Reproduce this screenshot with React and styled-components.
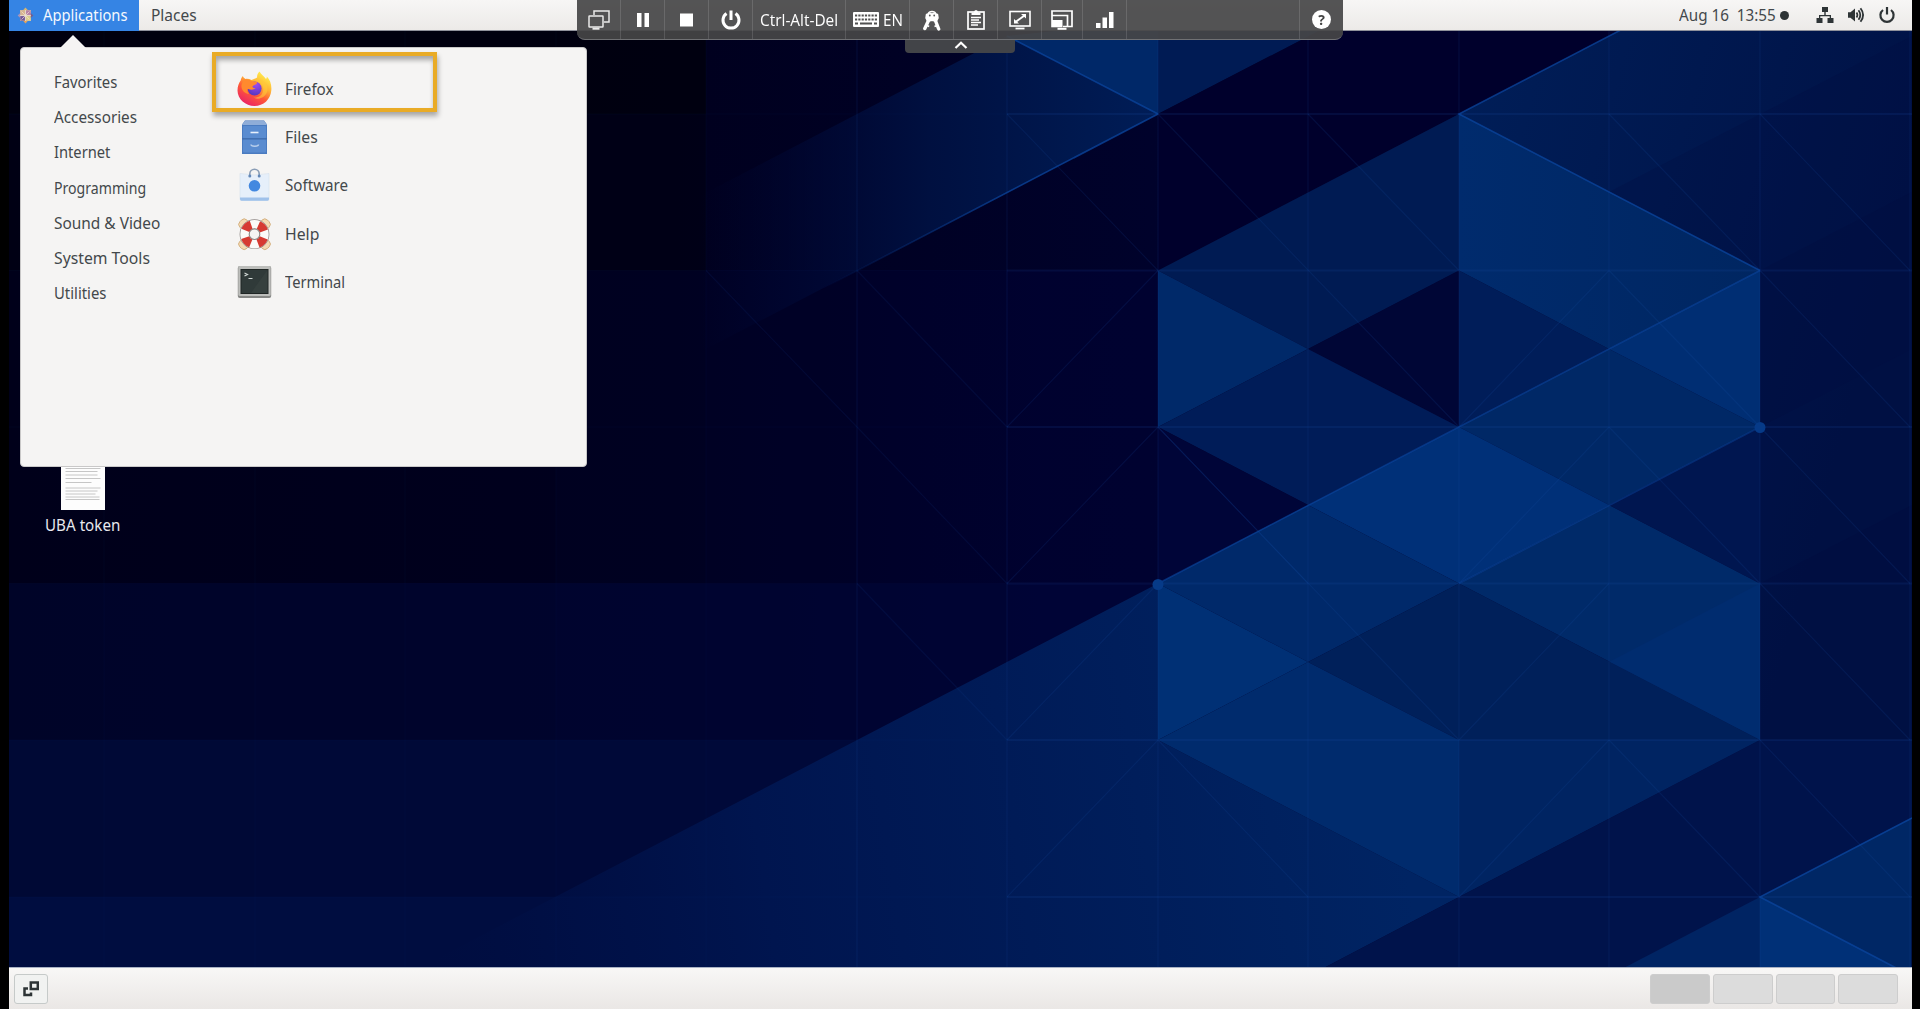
import React, { useLayoutEffect, useRef, useState } from "react";
import styled, { createGlobalStyle } from "styled-components";

const GlobalStyle = createGlobalStyle`
  * { box-sizing: border-box; }
  html, body { margin: 0; padding: 0; background: #000; overflow: hidden; }
`;

const Screen = styled.div`
  position: relative;
  width: 1920px;
  height: 1009px;
  padding: 0 8px 0 9px;
  background: #000;
  display: flex;
  flex-direction: column;
  overflow: hidden;
  font-family: "Noto Sans", "Open Sans", sans-serif;
  font-size: 16px;
  color: #43484b;
`;

const TopBar = styled.header`
  height: 31px;
  flex: none;
  display: flex;
  align-items: stretch;
  justify-content: space-between;
  background: linear-gradient(#f7f6f5, #eceae8);
  border-bottom: 1px solid #8f919b;
`;

const BarGroup = styled.div`
  display: flex;
  align-items: center;
`;

const BarButton = styled.div`
  height: 31px;
  margin-bottom: -1px;
  padding-bottom: 1px;
  padding-left: ${(p) => p.$left}px;
  width: ${(p) => p.$width}px;
  display: flex;
  align-items: center;
  gap: 9px;
  background: ${(p) => (p.$active ? "#3584e4" : "transparent")};
  color: ${(p) => (p.$active ? "#f4f8fd" : "#43484b")};
`;

const StatusIcons = styled.div`
  display: flex;
  align-items: center;
  gap: 13px;
  padding-left: 27px;
  padding-right: 16px;
`;

const Dot = styled.span`
  width: 9px;
  height: 9px;
  margin-left: 4px;
  border-radius: 50%;
  background: #2e3436;
`;

const Desktop = styled.main`
  flex: 1;
  min-height: 0;
  overflow: hidden;
  background: #00001e;
`;

const Wallpaper = styled.svg`
  display: block;
  width: 1903px;
  height: 936px;
`;

const BottomBar = styled.footer`
  height: 42px;
  flex: none;
  display: flex;
  align-items: flex-start;
  justify-content: space-between;
  padding: 6px 14px 0 5px;
  background: linear-gradient(#f8f7f6, #eae7e5);
  border-top: 1px solid #a9b2c4;
`;

const ShowDesktop = styled.div`
  width: 34px;
  height: 30px;
  display: flex;
  align-items: center;
  justify-content: center;
  border: 1px solid #c6cac9;
  border-radius: 3px;
  background: #f1f2f1;
`;

const Workspaces = styled.div`
  display: flex;
  gap: 3px;
`;

const Workspace = styled.div`
  width: ${(p) => (p.$active ? 60 : 59.7)}px;
  height: 30px;
  border: 1px solid #cdcdcd;
  border-radius: 3px;
  background: ${(p) => (p.$active ? "#cacaca" : "#dcdcdc")};
`;

const Menu = styled.nav`
  position: absolute;
  left: 20px;
  top: 47px;
  width: 567px;
  height: 420px;
  display: flex;
  background: #f5f4f3;
  border: 1px solid #c9c8c8;
  border-radius: 4px;
`;

const MenuArrow = styled.span`
  position: absolute;
  left: 38px;
  top: -13px;
  width: 28px;
  height: 14px;
  background: #f5f4f3;
  clip-path: polygon(50% 0, 100% 100%, 0 100%);
`;

const Categories = styled.div`
  width: 192px;
  padding: 16.500px 0 0 33px;
  display: flex;
  flex-direction: column;
`;

const Category = styled.div`
  height: 35.2px;
  display: flex;
  align-items: center;
`;

const Apps = styled.div`
  width: 224px;
  padding: 16.4px 0 0 24px;
`;

const AppRow = styled.div`
  height: 48.4px;
  display: flex;
  align-items: center;
  gap: 13px;
`;

const Highlight = styled.div`
  position: absolute;
  left: 212px;
  top: 52px;
  width: 225px;
  height: 60px;
  border: 4px solid #e9ab26;
  box-shadow: 1px 4px 5px rgba(0, 0, 0, 0.32), inset 1px 4px 5px rgba(0, 0, 0, 0.32);
`;

const DesktopFile = styled.div`
  position: absolute;
  left: 40px;
  top: 450px;
  width: 85px;
  display: flex;
  flex-direction: column;
  align-items: center;
  gap: 4px;
  color: #e8e8ee;
`;

const Toolbar = styled.div`
  position: absolute;
  left: 577px;
  top: 0;
  width: 766px;
  height: 40px;
  display: flex;
  background: rgba(69, 69, 70, 0.92);
  border-bottom: 1px solid #707174;
  border-radius: 0 0 8px 8px;
  color: #fff;
  font-family: "Open Sans", "Noto Sans", sans-serif;
`;

const Tool = styled.div`
  width: ${(p) => p.$width}px;
  height: 39px;
  display: flex;
  align-items: center;
  justify-content: center;
  gap: 4px;
  border-right: ${(p) => (p.$last ? "0" : "1px solid rgba(255, 255, 255, 0.13)")};
`;

const Handle = styled.div`
  position: absolute;
  left: 905px;
  top: 40px;
  width: 110px;
  height: 13px;
  padding: 0 0 3px 2px;
  display: flex;
  align-items: center;
  justify-content: center;
  background: #424448;
  border-radius: 0 0 4px 4px;
`;

const TextBox = styled.span`
  display: inline-block;
  flex: none;
  width: ${(p) => p.$width}px;
  line-height: 22px;
  white-space: nowrap;
`;

const TextRun = styled.span`
  display: inline-block;
  transform-origin: 0 50%;
`;

// Condenses or widens a label so that it fills the given width.
function Label({ width, children }) {
  const ref = useRef(null);
  const [scale, setScale] = useState(1);
  useLayoutEffect(() => {
    const natural = ref.current.offsetWidth;
    if (natural) setScale(width / natural);
  }, [width]);
  return (
    <TextBox $width={width}>
      <TextRun ref={ref} style={{ transform: `scaleX(${scale})` }}>
        {children}
      </TextRun>
    </TextBox>
  );
}

const COLS = [104, 255, 405, 556, 706, 857, 1007, 1158, 1308, 1459, 1609, 1760, 1910];
const ROWS = [114, 270.5, 427, 583.5, 740, 897];

const FACETS = [
  ["1158,20 1007,36 1158,114", "#002868"],
  ["1158,20 1340,20 1158,114", "#001b54"],
  ["1158,114 1340,20 1640,20 1459,114 1158,270.5", "#00002c"],
  ["1158,270.5 1459,114 1459,270.5 1308,349", "#001b53"],
  ["1158,270.5 1308,349 1158,427", "#002969"],
  ["1459,114 1760,270.5 1609,349 1459,270.5", "url(#upper)"],
  ["1459,270.5 1308,349 1459,427", "#000636"],
  ["1459,270.5 1609,349 1459,427", "#001d59"],
  ["1760,270.5 1609,349 1760,427", "#002e73"],
  ["1158,427 1308,349 1459,427 1308,505", "#001c58"],
  ["1459,427 1609,349 1760,427 1609,505", "#002866"],
  ["1459,427 1609,505 1459,583.5 1308,505", "#003078"],
  ["1158,427 1308,505 1158,583.5", "#000538"],
  ["1158,583.5 1308,505 1459,583.5 1308,662", "#00296a"],
  ["1459,583.5 1609,505 1760,583.5 1760,740", "#002a69"],
  ["1760,583.5 1609,662 1760,740", "#002c6f"],
  ["1760,427 1609,505 1760,583.5", "#001650"],
  ["1158,583.5 1308,662 1158,740", "#003075"],
  ["1459,583.5 1760,740 1459,740 1308,662", "#00205a"],
  ["1459,740 1760,740 1459,897", "#002462"],
  ["1158,740 1308,662 1459,740 1459,897", "#002b6d"],
  ["1760,740 1459,897 1320,970 1911,970 1911,740", "#00134b"],
  ["1911,818 1760,897 1911,976", "#002765"],
  ["1760,897 1618,971 1760,971", "#002463"],
  ["1760,897 1760,971 1902,971", "#003077"],
];

const DIAGONALS = [
  [857, 427, 706, 270.5], [1007, 427, 857, 270.5], [1158, 270.5, 1007, 427],
  [1158, 270.5, 1007, 114], [1158, 427, 1007, 583.5], [1007, 583.5, 857, 427],
  [1158, 583.5, 1007, 740], [1308, 583.5, 1158, 427], [1459, 427, 1158, 114],
  [1459, 270.5, 1308, 114], [1459, 427, 1609, 270.5], [1007, 740, 857, 583.5],
  [1459, 740, 1158, 427], [1459, 740, 1609, 583.5],
  [1459, 897, 1609, 740], [1459, 583.5, 1609, 427], [1760, 897, 1609, 740],
  [1910, 897, 1760, 740], [1910, 740, 1760, 583.5], [1910, 583.5, 1760, 427],
  [1910, 427, 1760, 270.5], [1910, 270.5, 1760, 114], [1760, 270.5, 1609, 114],
  [1760, 427, 1609, 270.5], [1760, 583.5, 1609, 427], [1158, 740, 1007, 897],
  [1308, 897, 1158, 740],
];

function Background() {
  return (
    <Wallpaper viewBox="9 31 1903 936">
      <defs>
        <linearGradient id="sky" x1="0" x2="1">
          <stop offset="0" stopColor="#00001a" />
          <stop offset="0.35" stopColor="#00001e" />
          <stop offset="0.6" stopColor="#00022b" />
          <stop offset="1" stopColor="#00154a" />
        </linearGradient>
        <linearGradient id="band" gradientUnits="userSpaceOnUse" x1="700" x2="1158" y1="0" y2="0">
          <stop offset="0" stopColor="#00093a" stopOpacity="0" />
          <stop offset="0.5" stopColor="#001040" />
          <stop offset="1" stopColor="#001d57" />
        </linearGradient>
        <linearGradient id="beam" gradientUnits="userSpaceOnUse" x1="430" x2="1400" y1="967" y2="820">
          <stop offset="0" stopColor="#000f44" stopOpacity="0" />
          <stop offset="0.15" stopColor="#001148" stopOpacity="0.7" />
          <stop offset="0.35" stopColor="#00154f" />
          <stop offset="1" stopColor="#002463" />
        </linearGradient>
        <linearGradient id="east" gradientUnits="userSpaceOnUse" x1="1459" x2="1911" y1="60" y2="180">
          <stop offset="0" stopColor="#001e58" />
          <stop offset="1" stopColor="#001246" />
        </linearGradient>
        <linearGradient id="upper" x1="0" x2="1">
          <stop offset="0" stopColor="#002b6d" />
          <stop offset="1" stopColor="#002661" />
        </linearGradient>
        <linearGradient id="edge" gradientUnits="userSpaceOnUse" x1="820" x2="1007" y1="0" y2="0">
          <stop offset="0" stopColor="#0b47a0" stopOpacity="0" />
          <stop offset="1" stopColor="#0b47a0" />
        </linearGradient>
      </defs>
      <rect x="9" y="31" width="1903" height="936" fill="url(#sky)" />
      <rect x="9" y="31" width="697" height="83" fill="#000006" opacity="0.6" />
      <rect x="9" y="114" width="697" height="156.500" fill="#000010" opacity="0.55" />
      <rect x="9" y="583.5" width="1149" height="156.5" fill="#00052f" opacity="0.7" />
      <rect x="9" y="740" width="1149" height="157" fill="#000a38" opacity="0.9" />
      <rect x="9" y="897" width="1149" height="70" fill="#000d40" />
      {COLS.slice(0, 7).map((x, i) => (
        <rect key={x} x={x} y="583.5" width={1158 - x} height="384" fill="#00134a" opacity={0.05 + i * 0.004} />
      ))}
      {COLS.slice(3, 7).map((x) => (
        <rect key={x} x={x} y="270.5" width={1158 - x} height="313" fill="#000c40" opacity="0.09" />
      ))}
      <polygon points="1007,36 1158,114 706,349 640,349 640,227" fill="url(#band)" />
      <polygon points="1158,583.5 1158,740 1459,897 1320,970 415,970" fill="url(#beam)" />
      <polygon points="1459,114 1640,20 1912,20 1912,740 1760,740 1760,270.5" fill="url(#east)" />
      <polygon points="1609,192 1912,36 1912,349 1760,427 1760,270.5" fill="#000c40" opacity="0.25" />
      <polygon points="1760,270.5 1912,192 1912,740 1760,740" fill="#000c40" opacity="0.3" />
      <polygon points="1760,583.5 1912,505 1912,583.5" fill="#000c40" opacity="0.35" />
      {FACETS.map(([points, fill]) => (
        <polygon key={points} points={points} fill={fill} />
      ))}
      <g stroke="#1c56b0" fill="none">
        {COLS.map((x) => (
          <line key={x} x1={x} x2={x} y1="31" y2="967" strokeWidth="1.4" opacity={x < 800 ? 0.04 : 0.12} />
        ))}
        {ROWS.map((y) => (
          <React.Fragment key={y}>
            <line x1="9" x2="1007" y1={y} y2={y} opacity="0.05" />
            <line x1="1007" x2="1912" y1={y} y2={y} strokeWidth="2" opacity="0.14" />
          </React.Fragment>
        ))}
        {DIAGONALS.map(([a, b, c, d], i) => (
          <line key={i} x1={a} y1={b} x2={c} y2={d} strokeWidth="1.1" opacity={a < 1008 ? 0.11 : 0.15} />
        ))}
      </g>
      <g fill="none" stroke="#0b47a0" strokeWidth="1.6" opacity="0.75">
        <path d="M1007 36 1158 114" />
        <path d="M1158 114 820 290" stroke="url(#edge)" />
        <path d="M1640 20 1459 114 1760 270.5" />
        <path d="M1760 270.5 1158 583.5" opacity="0.8" />
        <path d="M1760 427 1459 583.5" opacity="0.6" />
        <path d="M1912 818 1760 897 1902 971" />
      </g>
      <circle cx="1158" cy="584.5" r="5.5" fill="#063a88" />
      <circle cx="1760" cy="427.5" r="5.5" fill="#063a88" />
    </Wallpaper>
  );
}

const CentosIcon = () => (
  <svg width="17" height="17" viewBox="0 0 17 17">
    <rect x="3" y="3" width="11" height="11" fill="#cdbba8" />
    <path d="M8.500 0.600 11.200 3.600H5.800z" fill="#d8b672" />
    <path d="M16.400 8.500 13.400 11.200V5.800z" fill="#6f5f92" />
    <path d="M8.500 16.400 5.800 13.400h5.400z" fill="#e6a45c" />
    <path d="M.6 8.500 3.600 5.800v5.400z" fill="#a894b8" />
    <path d="M3.400 3.400h4.500v4.500H3.400z" fill="#d8b590" />
    <path d="M9.100 3.400h4.500v4.500H9.100z" fill="#b77fa8" />
    <path d="M9.100 9.100h4.500v4.500H9.100z" fill="#ddd08e" />
    <path d="M3.400 9.100h4.500v4.500H3.400z" fill="#74579a" />
    <path d="M8.500 3v11M3 8.500h11M4.500 4.500l8 8M12.500 4.500l-8 8" stroke="#f0e4d2" strokeWidth="0.700" />
  </svg>
);

const FirefoxIcon = () => (
  <svg width="35" height="36" viewBox="0 0 35 36">
    <defs>
      <linearGradient id="fx" x1="0.85" y1="0.05" x2="0.3" y2="1">
        <stop offset="0" stopColor="#fff44f" />
        <stop offset="0.35" stopColor="#ffb534" />
        <stop offset="0.62" stopColor="#ff5a36" />
        <stop offset="1" stopColor="#ea2267" />
      </linearGradient>
      <radialGradient id="fxGlobe" cx="0.6" cy="0.2" r="0.9">
        <stop offset="0" stopColor="#a04bf0" />
        <stop offset="1" stopColor="#4c35b8" />
      </radialGradient>
    </defs>
    <path d="M22.5.5c1.500 3 4.500 4.500 6.500 7.500.8-.6.900-1.500.800-2.500 3.500 3.500 5 8.500 4.500 14C33.500 28.500 26.500 35 17.500 35S.5 28 .5 19.500c0-4 1.300-7.500 3.200-10 .2-1.700 1-3.300 2.200-4.500.4 1.300 1.200 2.300 2.600 2.900 2-.3 4.300.1 6 1 2.500-1 5-1.600 5.600-2.300-.2-2.100.6-4.600 2.400-6.100z" fill="url(#fx)" />
    <circle cx="17.600" cy="17.500" r="7" fill="url(#fxGlobe)" />
    <path d="M6.500 8.500c3-.8 6.300-.2 8.600 1.700 2.900.1 5 .6 5.100 1.500-.5 1.900-3.800 2.300-4.600 3.600-.5 1.300 1.200 2 2.900 1.800-.8 1.600-4.500 2.400-7.200 .9-1.400-.3-1.600 1.700.8 5C6.500 22.500 4 18 4.500 14z" fill="#ff8a2e" />
    <path d="M19 9.500c4 .5 7.500 4.500 7.200 9.300-.3 5.500-5 8.500-9.700 7.800 7 3.500 14.500-2 14-9.500C30.200 11.500 24.500 8 19 9.500z" fill="#ffc93a" opacity="0.6" />
  </svg>
);

const FilesIcon = () => (
  <svg width="35" height="36" viewBox="0 0 35 36">
    <path d="M8 1.500h19l3 4V35H5V5.500z" fill="#4a7bc0" />
    <path d="M8 1.500h19l3 4.500H5z" fill="#8fadd8" />
    <rect x="6" y="7" width="23" height="12.300" rx="1" fill="#5a8cd0" />
    <rect x="6" y="20.500" width="23" height="13" rx="1" fill="#5a8cd0" />
    <path d="M5 19.800h25" stroke="#3c68a8" />
    <path d="M13.500 13.500h8" stroke="#e8f0fb" strokeWidth="1.600" />
    <path d="M14 25.500c0 2.200 7.500 2.200 7.500 0" stroke="#b9cfec" strokeWidth="1.500" fill="none" />
  </svg>
);

const SoftwareIcon = () => (
  <svg width="35" height="36" viewBox="0 0 35 36">
    <path d="M3 6.500q14.500 3 29 0V32q0 1.500-1.500 1.500h-26Q3 33.500 3 32z" fill="#e6effa" stroke="#d5e0ee" strokeWidth="0.600" />
    <path d="M3 30.500h29V32q0 1.700-1.500 1.700h-26Q3 33.700 3 32z" fill="#9fc1ea" />
    <path d="M12.800 8.500V7a4.700 4.700 0 0 1 9.400 0v1.500" fill="none" stroke="#8a9db6" strokeWidth="1.600" />
    <circle cx="12.800" cy="9" r="1.500" fill="#6388b8" />
    <circle cx="22.200" cy="9" r="1.500" fill="#6388b8" />
    <circle cx="17.500" cy="18.800" r="5.800" fill="#4388e0" />
  </svg>
);

const HelpIcon = () => (
  <svg width="35" height="36" viewBox="0 0 35 36">
    <g fill="#f4dab3" stroke="#d2ad7c" strokeWidth="0.900">
      <rect x="2" y="3.500" width="10" height="9.500" rx="4" transform="rotate(-45 7 8.200)" />
      <rect x="23" y="3.500" width="10" height="9.500" rx="4" transform="rotate(45 28 8.200)" />
      <rect x="2" y="23.500" width="10" height="9.500" rx="4" transform="rotate(45 7 28.200)" />
      <rect x="23" y="23.500" width="10" height="9.500" rx="4" transform="rotate(-45 28 28.200)" />
    </g>
    <circle cx="17.500" cy="18.200" r="9.900" fill="none" stroke="#8f8886" strokeWidth="10" />
    <circle cx="17.500" cy="18.200" r="9.900" fill="none" stroke="#fbfaf9" strokeWidth="8.600" />
    <circle cx="17.500" cy="18.200" r="9.900" fill="none" stroke="#d63a32" strokeWidth="8.600" strokeDasharray="8.200 7.350" strokeDashoffset="-3.680" />
    <circle cx="17.500" cy="18.200" r="5.300" fill="#f5f4f3" stroke="#8f8886" strokeWidth="1.100" />
  </svg>
);

const TerminalIcon = () => (
  <svg width="35" height="36" viewBox="0 0 35 36">
    <rect x="0.800" y="2" width="33.400" height="32" rx="2" fill="#858684" />
    <rect x="1.300" y="2" width="32.400" height="30" rx="1.500" fill="#bdbebb" />
    <rect x="4" y="5.500" width="27" height="24" fill="#303a39" stroke="#1f2524" />
    <path d="M30.500 6v23H14z" fill="#3b4644" opacity="0.500" />
    <path d="M7.500 9l3 1.500-3 1.500M11.500 14.500h4" stroke="#cfd6d3" strokeWidth="1.200" fill="none" />
  </svg>
);

const NetworkIcon = () => (
  <svg width="18" height="18" viewBox="0 0 18 18" fill="#2e3436">
    <path d="M6 1h6v5H9.700v3H15v3h-1.300v-1.700H4.300V12H3V9h5.300V6H6z" />
    <rect x="0.500" y="12" width="6" height="5" />
    <rect x="11.500" y="12" width="6" height="5" />
  </svg>
);

const VolumeIcon = () => (
  <svg width="18" height="18" viewBox="0 0 18 18" fill="none" stroke="#2e3436" strokeWidth="1.800">
    <path d="M1 6.200h2.500L8 2.500v13l-4.500-3.700H1z" fill="#2e3436" stroke="none" />
    <path d="M9.500 6.500q1.800 2.500 0 5M11.500 4.300q3.600 4.700 0 9.400M13.500 2.300q5.200 6.700 0 13.400" />
  </svg>
);

const StatusPowerIcon = () => (
  <svg width="18" height="18" viewBox="0 0 18 18" fill="none" stroke="#2e3436" strokeWidth="2.200">
    <path d="M5 4a6.600 6.600 0 1 0 8 0M9 1v7.500" />
  </svg>
);

const MonitorsIcon = () => (
  <svg width="24" height="22" viewBox="0 0 24 22" fill="none" stroke="#e9e9e9" strokeWidth="1.500">
    <path d="M7 6V2h15v11h-5" />
    <rect x="2" y="7" width="14" height="11" rx="0.500" />
    <path d="M5.500 19.700h7" strokeWidth="2" />
  </svg>
);

const PauseIcon = () => (
  <svg width="12" height="14" viewBox="0 0 12 14" fill="#fff"><path d="M0 0h4.500v14H0zM7.500 0H12v14H7.500z" /></svg>
);

const StopIcon = () => (
  <svg width="13" height="14" viewBox="0 0 13 14" fill="#fff"><path d="M0 .5h13v13H0z" /></svg>
);

const PowerIcon = () => (
  <svg width="20" height="20" viewBox="0 0 20 20" fill="none" stroke="#fff" strokeWidth="3">
    <path d="M5.500 3.500a8 8 0 1 0 9 0M10 .5V10" />
  </svg>
);

const KeyboardIcon = () => (
  <svg width="26" height="15" viewBox="0 0 26 15">
    <rect width="26" height="15" rx="1" fill="#fff" />
    <path d="M2 3.500h22M2 7.500h22" stroke="#505050" strokeWidth="2" strokeDasharray="2.200 1.100" />
    <path d="M2 11.500h3M7 11.500h12M21 11.500h3" stroke="#505050" strokeWidth="2" />
  </svg>
);

const KeysIcon = () => (
  <svg width="20" height="22" viewBox="0 0 20 22" fill="none" stroke="#fff">
    <path d="M6 5a4.200 3.600 0 0 1 8 0" strokeWidth="1.500" />
    <path d="M4.500 5.500 9 4.500l2 3-1.500 4-4 .5L4 9z" fill="#fff" strokeWidth="1.500" strokeLinejoin="round" />
    <path d="M15.500 5.500 11 4.500l-2 3 1.500 4 4 .5L16 9z" fill="#fff" strokeWidth="1.500" strokeLinejoin="round" />
    <path d="M7 10.500 2.800 19.500M13 10.500l3.700 9.500" strokeWidth="3.400" strokeLinecap="round" />
    <path d="M5 16.500l2.200 1M15 16.500l-2.500 1" strokeWidth="1.800" />
    <circle cx="7.800" cy="6.500" r="0.900" fill="#555" stroke="none" />
    <circle cx="12.200" cy="6.500" r="0.900" fill="#555" stroke="none" />
  </svg>
);

const ClipboardIcon = () => (
  <svg width="18" height="21" viewBox="0 0 18 21" fill="none" stroke="#fff" strokeWidth="1.700">
    <rect x="1" y="3" width="16" height="17" />
    <path d="M4.500 6V3.500H7a2 2.500 0 0 1 4 0h2.500V6z" fill="#fff" stroke="none" />
    <path d="M4 8.500h10M4 11h8M4 13.500h10M4 16h7" strokeWidth="1.300" />
  </svg>
);

const FullscreenIcon = () => (
  <svg width="22" height="20" viewBox="0 0 22 20" fill="none" stroke="#fff" strokeWidth="1.600">
    <rect x="1" y="1.500" width="20" height="14.500" />
    <path d="M6.500 12 15.500 5.500" strokeWidth="2" />
    <path d="M12 4h5v4.500zM5 9v4.500h5z" fill="#fff" stroke="none" />
    <path d="M6.500 18.500h9" strokeWidth="1.800" />
  </svg>
);

const ScaleIcon = () => (
  <svg width="22" height="20" viewBox="0 0 22 20" fill="none" stroke="#fff" strokeWidth="1.700">
    <path d="M1 10V1h20v15.500H12M1 5.500h15.500V16" />
    <rect x="0.200" y="10" width="11.300" height="7.300" fill="#fff" stroke="none" />
    <path d="M6.500 18.800h9" strokeWidth="2" />
  </svg>
);

const SignalIcon = () => (
  <svg width="18" height="16" viewBox="0 0 18 16" fill="#fff">
    <path d="M0 11h4.500v5H0zM6.500 5.500H11V16H6.500zM13 0h4.500v16H13z" />
  </svg>
);

const HelpBadge = styled.span`
  width: 19px;
  height: 19px;
  display: flex;
  align-items: center;
  justify-content: center;
  border-radius: 50%;
  background: #fff;
  color: #444;
  font-size: 14px;
  font-weight: 700;
  line-height: 19px;
`;

const ShowDesktopIcon = () => (
  <svg width="16" height="16" viewBox="0 0 16 16" fill="none" stroke="#2e3436" strokeWidth="2.500">
    <rect x="7.800" y="1.500" width="7" height="6.500" />
    <path d="M5 7.500H1.500v6.500H8V11.500" />
  </svg>
);

const DocumentIcon = () => (
  <svg width="44" height="60" viewBox="0 0 44 60">
    <rect width="44" height="60" fill="#fdfdfd" />
    <path d="M4.500 18.500h35M4.500 21.500h32M4.500 25h32M4.500 28.500h35M4.500 32.500h26M4.500 38h35M4.500 41h32M4.500 44h30M4.500 47h34M4.500 49.500h34" stroke="#c6c6c6" />
  </svg>
);

const CATEGORIES = [
  ["Favorites", 63], ["Accessories", 83], ["Internet", 56], ["Programming", 92.5],
  ["Sound & Video", 106], ["System Tools", 95.5], ["Utilities", 52],
];

const APPS = [
  ["Firefox", 48.5, FirefoxIcon], ["Files", 32.5, FilesIcon], ["Software", 63.5, SoftwareIcon],
  ["Help", 34.5, HelpIcon], ["Terminal", 60.5, TerminalIcon],
];

export default function App() {
  return (
    <Screen>
      <GlobalStyle />
      <TopBar>
        <BarGroup>
          <BarButton $active $left={8} $width={130}>
            <CentosIcon />
            <Label width={84.5}>Applications</Label>
          </BarButton>
          <BarButton $left={12} $width={70}>
            <Label width={45.5}>Places</Label>
          </BarButton>
        </BarGroup>
        <BarGroup>
          <Label width={97}>Aug 16&nbsp; 13:55</Label>
          <Dot />
          <StatusIcons>
            <NetworkIcon />
            <VolumeIcon />
            <StatusPowerIcon />
          </StatusIcons>
        </BarGroup>
      </TopBar>
      <Desktop>
        <Background />
      </Desktop>
      <BottomBar>
        <ShowDesktop><ShowDesktopIcon /></ShowDesktop>
        <Workspaces>
          <Workspace $active />
          <Workspace />
          <Workspace />
          <Workspace />
        </Workspaces>
      </BottomBar>

      <DesktopFile>
        <DocumentIcon />
        <Label width={75}>UBA token</Label>
      </DesktopFile>

      <Menu>
        <MenuArrow />
        <Categories>
          {CATEGORIES.map(([name, width]) => (
            <Category key={name}><Label width={width}>{name}</Label></Category>
          ))}
        </Categories>
        <Apps>
          {APPS.map(([name, width, Icon]) => (
            <AppRow key={name}>
              <Icon />
              <Label width={width}>{name}</Label>
            </AppRow>
          ))}
        </Apps>
      </Menu>
      <Highlight />

      <Toolbar>
        <Tool $width={44}><MonitorsIcon /></Tool>
        <Tool $width={44}><PauseIcon /></Tool>
        <Tool $width={44}><StopIcon /></Tool>
        <Tool $width={44}><PowerIcon /></Tool>
        <Tool $width={93}><Label width={78}>Ctrl-Alt-Del</Label></Tool>
        <Tool $width={64}><KeyboardIcon /><Label width={20}>EN</Label></Tool>
        <Tool $width={44}><KeysIcon /></Tool>
        <Tool $width={44}><ClipboardIcon /></Tool>
        <Tool $width={44}><FullscreenIcon /></Tool>
        <Tool $width={41}><ScaleIcon /></Tool>
        <Tool $width={44}><SignalIcon /></Tool>
        <Tool $width={173} />
        <Tool $width={43} $last><HelpBadge>?</HelpBadge></Tool>
      </Toolbar>
      <Handle>
        <svg width="14" height="8" viewBox="0 0 14 8" fill="none" stroke="#fff" strokeWidth="2.200">
          <path d="M1.500 7 7 1.800 12.500 7" />
        </svg>
      </Handle>
    </Screen>
  );
}
